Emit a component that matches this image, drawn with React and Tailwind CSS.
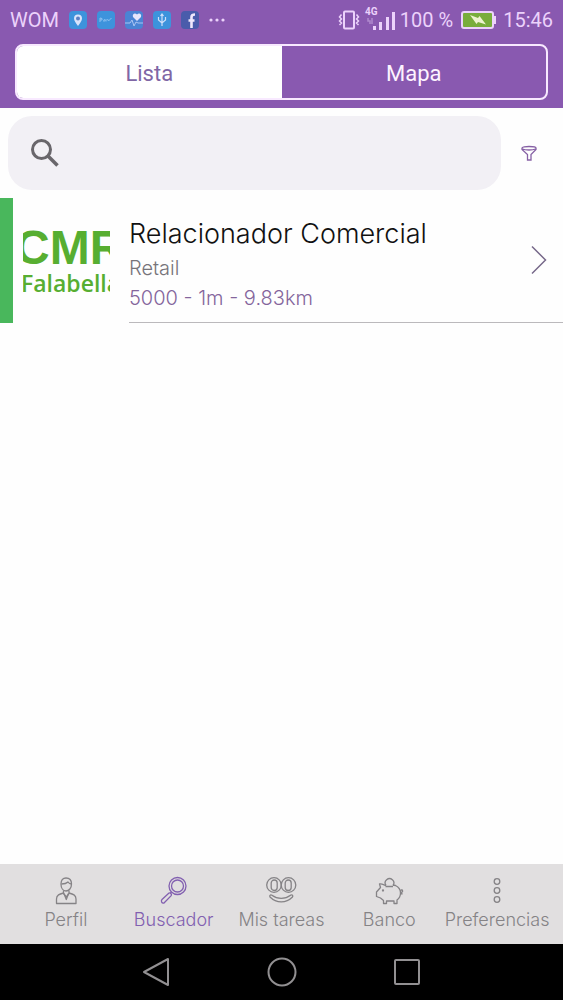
import React, { useState } from "react";

const statusApps = [
    {
        name: "Maps",
        bg: "bg-[#3d93dc]",
        art: (
            <>
                <path d="M9 15C7 12 5 10 5 7.500a4 4 0 0 1 8 0C13 10 11 12 9 15Z" fill="#d9e4fb" />
                <circle cx="9" cy="7.500" r="2" fill="#5c7fc4" />
            </>
        ),
    },
    {
        name: "Pay",
        bg: "bg-[#3d93dc]",
        art: <path d="M3 11V7q3 0 2 2H3M8 8.500q-2 0-1 2l2-2v2M10.500 8l1 2 3-3" fill="none" stroke="#8cc0f0" strokeWidth="1" />,
    },
    {
        name: "Health",
        bg: "bg-[#4a84d4]",
        art: (
            <>
                <path d="M12 10 8 6c-1-3 2-4.500 4-2.500 2-2 5-.5 4 2.500Z" fill="#e6e6fb" />
                <path d="M0 12h5l2-3 2 6 2-4 2 1h5" fill="none" stroke="#a9c4f2" strokeWidth="1" />
            </>
        ),
    },
    {
        name: "USB",
        bg: "bg-[#3d93dc]",
        art: <path d="M9 15V3M7.500 5 9 3l1.500 2M5.500 6v3L9 12l3.500-3V6" fill="none" stroke="#cfe0fa" strokeWidth="1.200" />,
    },
    {
        name: "Facebook",
        bg: "bg-[#4a5cab]",
        art: <path d="M10.500 17V10M7.500 9.500h6M10.500 10V6q0-2.500 3.500-2.500" fill="none" stroke="#f0e8fc" strokeWidth="2.600" />,
    },
];

const tabs = [
    {
        label: "Perfil",
        icon: (
            <>
                <path d="M9 8c0-4 2-6 5-6s5.500 2 5.500 6c0 4-2.500 7-5.500 7S9 12 9 8Z" />
                <path d="M9.500 8c3 0 5-.5 6.500-2 .8 1.200 2 2 3.500 2M11.500 14.500v3l2.800 3.500 2.700-3.500v-3" />
                <path d="M11.500 17c-4 1-7 2-7 6v4.500h19.500V23c0-4-3-5-7-6M12 17.500l2.300 6 2.200-6" />
            </>
        ),
    },
    {
        label: "Buscador",
        icon: (
            <>
                <circle cx="17.500" cy="10" r="8.500" />
                <circle cx="17.500" cy="10" r="6" />
                <path d="M11.500 16 10 17.500M9 17l-7 6.500c-1.200 1.200-.5 4 2 3.500l7.200-7.400c.8-1.500-.7-3.200-2.200-2.600Z" />
            </>
        ),
    },
    {
        label: "Mis tareas",
        icon: (
            <>
                <circle cx="7" cy="9" r="7.300" />
                <circle cx="21.500" cy="9" r="7.300" />
                <rect x="4.200" y="4" width="6" height="10.500" rx="3" />
                <rect x="18.200" y="4" width="6" height="10.500" rx="3" />
                <path d="M4.500 19c6 4.500 13.500 4.500 19.500 0 1.500-.5 2.200 1 1.500 2-6.500 6.500-16 6.500-22.500 0-.7-1.300.3-2.500 1.500-2Z" />
            </>
        ),
    },
    {
        label: "Banco",
        icon: (
            <>
                <path d="M11 9.500a4.300 4.300 0 1 1 7 0" />
                <path d="M11 9.500C9 9 7 7.500 4.500 8L5.500 11.500 1.500 16v4.500l4 1.500 3 2.500v3h3V25h7.500v2.500h3V24c2-1.500 3.500-4 3.500-7 0-3-2-6-5-7.500l-2.500-.5M10.500 10.500h7.500" />
                <path d="M25.500 16c1.500.8 2.500-.2 2-1.500s-2.300-.5-1.500.8M25.500 17.500l2 .5" />
                <circle cx="8" cy="14.500" r=".5" />
            </>
        ),
    },
    {
        label: "Preferencias",
        icon: (
            <>
                <circle cx="14" cy="5.500" r="2.800" />
                <circle cx="14" cy="14.500" r="2.800" />
                <circle cx="14" cy="23.500" r="2.800" />
            </>
        ),
    },
];

const StatusBar = () => (
    <div className="flex h-10 items-center justify-between px-2.5 text-xl text-[#ecd2fb]">
        <div className="flex items-center gap-2.5">
            <span>WOM</span>
            {statusApps.map((app) => (
                <span key={app.name} className={`size-4.5 rounded-sm ${app.bg}`}>
                    <svg viewBox="0 0 18 18" className="size-4.5">{app.art}</svg>
                </span>
            ))}
            <svg viewBox="0 0 16 4" className="h-1 w-4" fill="currentColor">
                <circle cx="2" cy="2" r="1.600" />
                <circle cx="8" cy="2" r="1.600" />
                <circle cx="14" cy="2" r="1.600" />
            </svg>
        </div>
        <div className="flex items-center gap-1">
            {/* Vibrate */}
            <svg viewBox="0 0 22 20" className="h-5 w-5.5" fill="none" stroke="currentColor" strokeWidth="2">
                <rect x="6" y="1.500" width="10" height="17" rx="1" />
                <path d="M3.500 4.500 1.500 7l2 2-2 2 2 2-2 2M18.500 4.500l2 2.500-2 2 2 2-2 2 2 2" strokeWidth="1.500" />
            </svg>
            {/* Signal */}
            <svg viewBox="0 0 32 24" className="-mt-1 h-6 w-8" fill="currentColor">
                <text x="1" y="9" fontSize="10" fontWeight="700">4G</text>
                <path d="M9 20h3v4H9zM15 16h3v8h-3zM22 11h3v13h-3zM28 6h3v18h-3z" />
                <path d="M4 12v3h2v3M8 12v6" stroke="currentColor" strokeWidth="1.500" fill="none" opacity=".4" />
            </svg>
            <span>100 %</span>
            {/* Battery */}
            <svg viewBox="0 0 36 18" className="mr-0.5 ml-1 h-4.5 w-9">
                <rect x="1" y="1" width="31" height="16" rx="2" fill="#79ad3c" stroke="#ecd2fb" strokeWidth="2" />
                <path d="M33 5h2v8h-2z" fill="#ecd2fb" />
                <path d="m9 4 8 3 1.500-2L25 13.500 17 11l-1.500 2Z" fill="#eef3d0" />
            </svg>
            <span>15:46</span>
        </div>
    </div>
);

const App = () => {
    const [view, setView] = useState("Lista");
    const [activeTab, setActiveTab] = useState("Buscador");
    const [search, setSearch] = useState("");

    return (
        <div className="flex min-h-screen flex-col bg-[#fefefe] font-[Inter,sans-serif] font-light">
            {/* Header */}
            <header className="bg-[#8959b0] pb-2 font-[Roboto,sans-serif] font-normal">
                <StatusBar />
                <div className="mx-[15px] mt-1 flex h-14 overflow-hidden rounded-lg border-2 border-[#f8e9ff]">
                    {["Lista", "Mapa"].map((item) => (
                        <button
                            key={item}
                            type="button"
                            onClick={() => setView(item)}
                            className={`flex-1 pt-0.5 text-[22px] ${view === item ? "bg-white text-[#8066a5]" : "text-[#fdf3ff]"}`}
                        >
                            {item}
                        </button>
                    ))}
                </div>
            </header>

            <main className="flex-1">
                {/* Search */}
                <div className="flex items-center py-2 pl-2">
                    <label className="flex h-[74px] flex-1 items-center rounded-3xl bg-[#f2f0f5] px-5">
                        <svg viewBox="0 0 32 32" className="size-8" fill="none" stroke="#69666b" strokeWidth="3">
                            <circle cx="13.500" cy="12.500" r="9" />
                            <path d="m20 19 9.500 9.500" strokeWidth="3.600" />
                        </svg>
                        <input
                            aria-label="Buscar"
                            className="ml-3 min-w-0 flex-1 bg-transparent text-xl outline-none"
                            value={search}
                            onChange={(e) => setSearch(e.target.value)}
                        />
                    </label>
                    <button type="button" aria-label="Filtrar" className="flex w-[62px] items-center pl-5">
                        <svg viewBox="0 0 16 16" className="size-4" fill="none" stroke="#8660a5" strokeWidth="1.300">
                            <path d="M1 3c0-2 14-2 14 0v1.500l-5 5V15H6.500V9.500L1 4.500ZM1.500 4c3 1.300 10 1.300 13 0" />
                        </svg>
                    </button>
                </div>

                {/* Job offer */}
                <a href="#oferta" className="flex h-[125px] border-l-[13px] border-[#49b75c]">
                    <div className="mt-7 ml-2.5 h-[72px] w-[87px] overflow-hidden whitespace-nowrap text-[#57ae31]">
                        <p className="-ml-2 font-['Liberation_Sans',sans-serif] text-5xl leading-[44px] font-bold">CMR</p>
                        <p className="-ml-0.5 font-['Open_Sans',sans-serif] text-[23px] leading-[26px] font-semibold">Falabella</p>
                    </div>
                    <div className="ml-[19px] flex flex-1 items-center border-b border-[#bbb9bc] pr-4">
                        <div className="flex-1 pt-2">
                            <h2 className="text-[27px] leading-9 text-[#111]">Relacionador Comercial</h2>
                            <p className="text-xl leading-8 text-[#77747a]">Retail</p>
                            <p className="text-xl leading-7 text-[#84659c]">5000 - 1m - 9.83km</p>
                        </div>
                        <svg viewBox="0 0 16 30" className="h-[30px] w-4" fill="none" stroke="#77698a" strokeWidth="1.500">
                            <path d="m1 1.500 13.500 13.500L1 28.500" />
                        </svg>
                    </div>
                </a>
            </main>

            {/* Tabs */}
            <nav className="flex h-20 bg-[#e1dfe0] px-3">
                {tabs.map((tab) => (
                    <button
                        key={tab.label}
                        type="button"
                        onClick={() => setActiveTab(tab.label)}
                        className={`flex flex-1 basis-0 flex-col items-center gap-0.5 pt-3 whitespace-nowrap ${activeTab === tab.label ? "text-[#8260b0]" : "text-[#858386]"}`}
                    >
                        <svg viewBox="0 0 28 28" className="size-7 overflow-visible" fill="none" stroke="currentColor" strokeWidth="1.300" strokeLinejoin="round">
                            {tab.icon}
                        </svg>
                        <span className="text-lg leading-7">{tab.label}</span>
                    </button>
                ))}
            </nav>

            {/* Android navigation */}
            <div className="flex h-14 items-center justify-center gap-[95px] bg-black text-[#929092]">
                <button type="button" aria-label="Atrás">
                    <svg viewBox="0 0 30 30" className="size-[30px]" fill="none" stroke="currentColor" strokeWidth="2" strokeLinejoin="round">
                        <path d="M26 2v26L2 15Z" />
                    </svg>
                </button>
                <button type="button" aria-label="Inicio">
                    <svg viewBox="0 0 30 30" className="size-[30px]" fill="none" stroke="currentColor" strokeWidth="2">
                        <circle cx="15" cy="15" r="13.500" />
                    </svg>
                </button>
                <button type="button" aria-label="Recientes">
                    <svg viewBox="0 0 30 30" className="size-[30px]" fill="none" stroke="currentColor" strokeWidth="2">
                        <rect x="3" y="3" width="24" height="24" rx="1" />
                    </svg>
                </button>
            </div>
        </div>
    );
};

export default App;
